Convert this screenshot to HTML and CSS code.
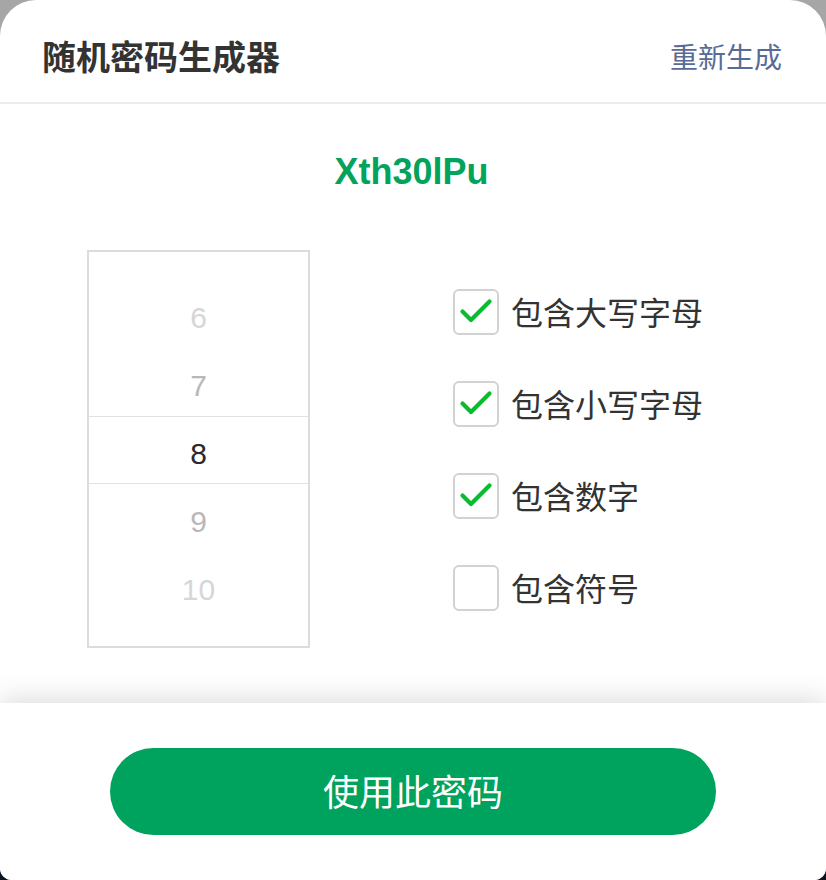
FILE: index.html
```html
<!DOCTYPE html>
<html lang="zh">
<head>
<meta charset="utf-8">
<title>随机密码生成器</title>
<link rel="stylesheet" href="styles.css">
</head>
<body>
<div class="sheet">
  <header class="header">
    <h1 class="title">随机密码生成器</h1>
    <a class="regen">重新生成</a>
  </header>
  <main class="main">
    <div class="pwd">Xth30lPu</div>
    <div class="options">
      <div class="picker">
        <div class="picker-list">
          <div class="pitem far">6</div>
          <div class="pitem near">7</div>
          <div class="pitem sel">8</div>
          <div class="pitem near">9</div>
          <div class="pitem far">10</div>
          <div class="pitem far">11</div>
        </div>
      </div>
      <div class="checks">
        <div class="check-row">
          <span class="box on"><svg viewBox="0 0 46 46" width="46" height="46"><path d="M9.5 22.5 L18 31 L36.5 12.5" fill="none" stroke="#09bb2e" stroke-width="4.2" stroke-linecap="round" stroke-linejoin="round"/></svg></span>
          <span class="label">包含大写字母</span>
        </div>
        <div class="check-row">
          <span class="box on"><svg viewBox="0 0 46 46" width="46" height="46"><path d="M9.5 22.5 L18 31 L36.5 12.5" fill="none" stroke="#09bb2e" stroke-width="4.2" stroke-linecap="round" stroke-linejoin="round"/></svg></span>
          <span class="label">包含小写字母</span>
        </div>
        <div class="check-row">
          <span class="box on"><svg viewBox="0 0 46 46" width="46" height="46"><path d="M9.5 22.5 L18 31 L36.5 12.5" fill="none" stroke="#09bb2e" stroke-width="4.2" stroke-linecap="round" stroke-linejoin="round"/></svg></span>
          <span class="label">包含数字</span>
        </div>
        <div class="check-row">
          <span class="box"></span>
          <span class="label">包含符号</span>
        </div>
      </div>
    </div>
  </main>
  <footer class="footer">
    <button class="use-btn">使用此密码</button>
  </footer>
</div>
</body>
</html>
```

FILE: styles.css
```css
html, body {
  margin: 0;
  padding: 0;
}
body {
  width: 826px;
  height: 880px;
  overflow: hidden;
  background: linear-gradient(#a6a6a6 0, #a6a6a6 50%, #0c1322 50%, #0c1322 100%);
  font-family: "Noto Sans CJK SC", "Liberation Sans", sans-serif;
}
.sheet {
  width: 826px;
  height: 880px;
  background: #fff;
  border-radius: 36px 36px 12px 12px;
  overflow: hidden;
  display: flex;
  flex-direction: column;
}
.header {
  border-bottom: 2px solid #ececec;
  display: flex;
  align-items: center;
  justify-content: space-between;
  padding: 10px 44px 0 42px;
  box-sizing: content-box;
  height: 92px;
  flex: none;
}
.title {
  margin: 0;
  font-size: 34px;
  font-weight: 700;
  color: #333;
  line-height: 1;
}
.regen {
  font-size: 28px;
  color: #576b95;
  line-height: 1;
}
.main {
  flex: 1;
  display: flex;
  flex-direction: column;
  align-items: center;
}
.pwd {
  margin-top: 50px;
  font-family: "Liberation Sans", Arial, sans-serif;
  font-weight: 700;
  font-size: 36px;
  line-height: 36px;
  color: #03a35c;
  padding-right: 3px;
}
.options {
  margin-top: 60px;
  width: 100%;
  display: flex;
  align-items: center;
  padding-left: 87px;
  box-sizing: border-box;
  gap: 143px;
}
.picker {
  width: 223px;
  height: 398px;
  box-sizing: border-box;
  border: 2px solid #dcdcdc;
  overflow: hidden;
}
.picker-list {
  padding-top: 28px;
}
.pitem {
  height: 68px;
  display: flex;
  align-items: center;
  justify-content: center;
  font-family: "Liberation Sans", Arial, sans-serif;
  font-size: 30px;
  box-sizing: border-box;
  padding-top: 7px;
}
.pitem.far { color: #d6d6d6; }
.pitem.near { color: #b8b8b8; }
.pitem.sel {
  color: #2a2a2a;
  border-top: 1px solid #e2e2e2;
  border-bottom: 1px solid #e2e2e2;
}
.checks {
  display: flex;
  flex-direction: column;
  gap: 46px;
  padding-top: 2px;
}
.check-row {
  display: flex;
  align-items: center;
  height: 46px;
  gap: 12px;
}
.box {
  width: 46px;
  height: 46px;
  box-sizing: border-box;
  border: 2px solid #d2d2d2;
  border-radius: 6px;
  position: relative;
  flex: none;
}
.box svg {
  position: absolute;
  left: -2px;
  top: -2px;
}
.label {
  font-size: 32px;
  color: #333;
  line-height: 1;
  padding-bottom: 2px;
}
.footer {
  flex: none;
  height: 177px;
  background: #fff;
  position: relative;
  z-index: 1;
  box-shadow: 0 -2px 28px rgba(0, 0, 0, 0.16);
  display: flex;
  justify-content: center;
  padding-top: 45px;
  box-sizing: border-box;
}
.use-btn {
  width: 606px;
  height: 87px;
  border: none;
  border-radius: 44px;
  background: #00a35e;
  color: #fff;
  font-family: "Noto Sans CJK SC", sans-serif;
  font-size: 36px;
  line-height: 1;
  padding: 0 0 4px;
}
```
